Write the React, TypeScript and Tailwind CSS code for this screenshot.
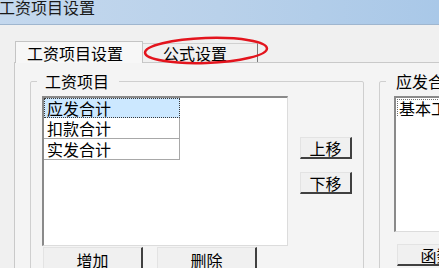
import React from "react";

const ITEMS = ["应发合计", "扣款合计", "实发合计"];

function WinButton({ label, className }: { label: string; className: string }) {
  return (
    <div
      className={`flex items-center justify-center bg-[#f0f0f0] border-t border-l border-t-[#e3e3e3] border-l-[#e3e3e3] border-r-2 border-b-2 border-r-[#404040] border-b-[#404040] text-[16px] leading-[16px] text-black ${className}`}
    >
      {label}
    </div>
  );
}

function ItemList() {
  return (
    <div className="w-[246px] h-[150px] bg-white border-t-2 border-l-2 border-t-[#8a8a8a] border-l-[#8a8a8a] border-r border-b border-r-[#dcdcdc] border-b-[#dcdcdc] flex flex-col">
      {ITEMS.map((item, i) => (
        <div
          key={item}
          className={
            i === 0
              ? "w-[136px] h-[20px] flex items-center pl-[2px] bg-[#cce8ff] border border-dotted border-[#3a3a3a] text-[16px] leading-[16px]"
              : "w-[136px] h-[21px] flex items-center pl-[3px] border-r border-b border-[#a8a8a8] text-[16px] leading-[16px]"
          }
        >
          {item}
        </div>
      ))}
    </div>
  );
}

export default function App() {
  return (
    <div className="relative w-[439px] h-[268px] overflow-hidden bg-[#f0f0f0] text-black font-['Noto_Sans_CJK_SC',sans-serif]">
      {/* Title bar */}
      <div className="h-[26px] border-b border-[#9fb6cf] bg-gradient-to-r from-[#c4d8ee] via-[#b9d1ea] to-[#a9c8e8]">
        <div className="ml-[-1px] mt-[-1px] text-[16px] leading-[16px] text-[#1a1a1a]">工资项目设置</div>
      </div>

      {/* Tabs */}
      <div className="mt-[16px] ml-[15px] h-[21px] flex items-end">
        <div className="relative z-10 mb-[-1px] w-[128px] h-[22px] pl-[11px] flex items-center bg-[#f7f7f7] border-t border-l border-r border-[#c4c4c4] text-[16px] leading-[16px]">
          工资项目设置
        </div>
        <div className="w-[115px] h-[19px] pl-[20px] flex items-center border-t border-r border-t-[#d0d0d0] border-r-[#7a7a7a] text-[16px] leading-[16px]">
          公式设置
        </div>
      </div>

      {/* Panel */}
      <div className="ml-[14px] h-[210px] border-t border-l border-[#c9c9c9] bg-[#f4f4f4] flex items-start">
        <fieldset className="ml-[15px] mt-[10px] w-[334px] h-[260px] shrink-0 border border-[#cfcfcf] rounded-[2px] pl-[11px] pt-[7px]">
          <legend className="ml-[-5px] pl-[8px] pr-[10px] text-[16px] leading-[16px]">工资项目</legend>
          <div className="flex">
            <ItemList />
            <div className="ml-[12px] pt-[41px] flex flex-col gap-[13px]">
              <WinButton label="上移" className="w-[52px] h-[22px]" />
              <WinButton label="下移" className="w-[52px] h-[22px]" />
            </div>
          </div>
          <div className="mt-[1px] flex">
            <WinButton label="增加" className="ml-[1px] w-[100px] h-[26px]" />
            <WinButton label="删除" className="ml-[14px] w-[100px] h-[26px]" />
          </div>
        </fieldset>

        <fieldset className="ml-[15px] mt-[10px] w-[120px] h-[260px] shrink-0 border border-[#cfcfcf] rounded-[2px] pl-[14px] pt-[7px]">
          <legend className="ml-[-8px] pl-[10px] pr-[10px] text-[16px] leading-[16px] whitespace-nowrap">应发合计</legend>
          <div className="w-[80px] h-[136px] bg-white border-t-2 border-l-2 border-t-[#8a8a8a] border-l-[#8a8a8a] border-b border-b-[#dcdcdc] overflow-hidden">
            <div className="mt-[1px] ml-[1px] pl-[1px] whitespace-nowrap border-t border-l border-dotted border-[#707070] text-[16px] leading-[16px]">
              基本工资
            </div>
          </div>
          <WinButton label="函数" className="mt-[12px] ml-[3px] w-[80px] h-[22px]" />
        </fieldset>
      </div>

      {/* Annotation */}
      <svg className="absolute left-0 top-0 pointer-events-none" width={439} height={268}>
        <ellipse
          cx={206}
          cy={50.5}
          rx={61}
          ry={12.5}
          fill="none"
          stroke="#e3141d"
          strokeWidth={2.5}
          transform="rotate(-2 206 50.5)"
        />
      </svg>
    </div>
  );
}
